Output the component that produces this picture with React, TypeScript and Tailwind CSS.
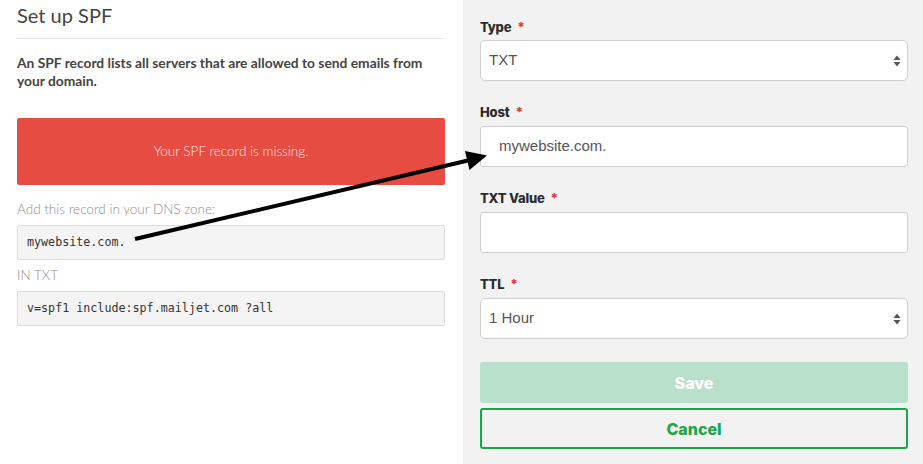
import React from "react";

const leftFont = { fontFamily: "Lato, 'Open Sans', sans-serif" };

function Label({ children }: { children: React.ReactNode }) {
  return (
    <div className="flex items-center gap-[6px] text-[13px] font-extrabold text-[#2b2b2b] h-[16px] font-['Inter',sans-serif] tracking-[-0.2px]">
      {children}
      <span className="text-[#e5322d] text-[13px]">*</span>
    </div>
  );
}

function Arrows() {
  return (
    <svg width="8" height="12" viewBox="0 0 8 12" className="text-[#555]">
      <path d="M4 0.5 L7.5 5 L0.5 5 Z" fill="currentColor" />
      <path d="M4 11.5 L7.5 7 L0.5 7 Z" fill="currentColor" />
    </svg>
  );
}

function SelectBox({ value }: { value: string }) {
  return (
    <div className="h-[41px] bg-white border border-[#cfcfcf] rounded-[5px] flex items-center justify-between pl-[8px] pr-[6px] text-[15px] text-[#555] font-['Liberation_Sans',Arial,sans-serif]">
      <span>{value}</span>
      <Arrows />
    </div>
  );
}

function InputBox({ value }: { value?: string }) {
  return (
    <div className="h-[41px] bg-white border border-[#cfcfcf] rounded-[3px] flex items-center pl-[18px] text-[15px] text-[#555] font-['Liberation_Sans',Arial,sans-serif]">
      {value}
    </div>
  );
}

export default function App() {
  return (
    <div className="relative w-[923px] h-[464px] flex overflow-hidden bg-white">
      {/* left column */}
      <div className="w-[463px] pl-[17px] pr-[18px] pt-[1px]" style={leftFont}>
        <h1 className="text-[20px] leading-[28px] text-[#444] font-normal">Set up SPF</h1>
        <div className="mt-[9px] border-t border-[#e3e3e3]" />
        <p className="mt-[15px] text-[13.8px] leading-[18px] font-bold text-[#444]">
          An SPF record lists all servers that are allowed to send emails from your domain.
        </p>
        <div className="mt-[28px] h-[67px] bg-[#e74c43] rounded-[2px] flex items-center justify-center text-[13.5px] text-[#fde4e2] font-light">
          Your SPF record is missing.
        </div>
        <div className="mt-[16px] text-[13.5px] text-[#8f8f8f] font-light leading-[16px]">Add this record in your DNS zone:</div>
        <div className="mt-[8px] h-[35px] bg-[#f4f4f4] border border-[#dcdcdc] rounded-[2px] flex items-center pl-[9px] text-[11.7px] text-[#333] font-['DejaVu_Sans_Mono',monospace]">
          mywebsite.com.
        </div>
        <div className="mt-[7px] text-[13.5px] text-[#8f8f8f] font-light leading-[16px]">IN TXT</div>
        <div className="mt-[8px] h-[35px] bg-[#f4f4f4] border border-[#dcdcdc] rounded-[2px] flex items-center pl-[9px] text-[11.7px] text-[#333] font-['DejaVu_Sans_Mono',monospace]">
          v=spf1 include:spf.mailjet.com ?all
        </div>
      </div>

      {/* right column */}
      <div className="flex-1 bg-[#f2f2f2] pl-[17px] pr-[15px] pt-[20px]">
        <Label>Type</Label>
        <div className="mt-[4px]">
          <SelectBox value="TXT" />
        </div>
        <div className="mt-[24px]">
          <Label>Host</Label>
        </div>
        <div className="mt-[5px]">
          <InputBox value="mywebsite.com." />
        </div>
        <div className="mt-[24px]">
          <Label>TXT Value</Label>
        </div>
        <div className="mt-[5px]">
          <InputBox />
        </div>
        <div className="mt-[24px]">
          <Label>TTL</Label>
        </div>
        <div className="mt-[5px]">
          <SelectBox value="1 Hour" />
        </div>
        <button className="mt-[23px] w-full h-[41px] rounded-[3px] bg-[#b8e0ca] text-white text-[16px] font-extrabold font-['Inter',sans-serif]">
          Save
        </button>
        <button className="mt-[5px] w-full h-[41px] rounded-[3px] border-2 border-[#1ba64a] text-[#1ba64a] text-[16px] font-extrabold font-['Inter',sans-serif]">
          Cancel
        </button>
      </div>

      {/* annotation arrow */}
      <svg className="absolute inset-0 pointer-events-none" width="923" height="464" viewBox="0 0 923 464">
        <line x1="135" y1="239" x2="470" y2="160" stroke="#000" strokeWidth="4" />
        <path d="M487 155.5 L465 151 L469.5 170 Z" fill="#000" />
      </svg>
    </div>
  );
}
